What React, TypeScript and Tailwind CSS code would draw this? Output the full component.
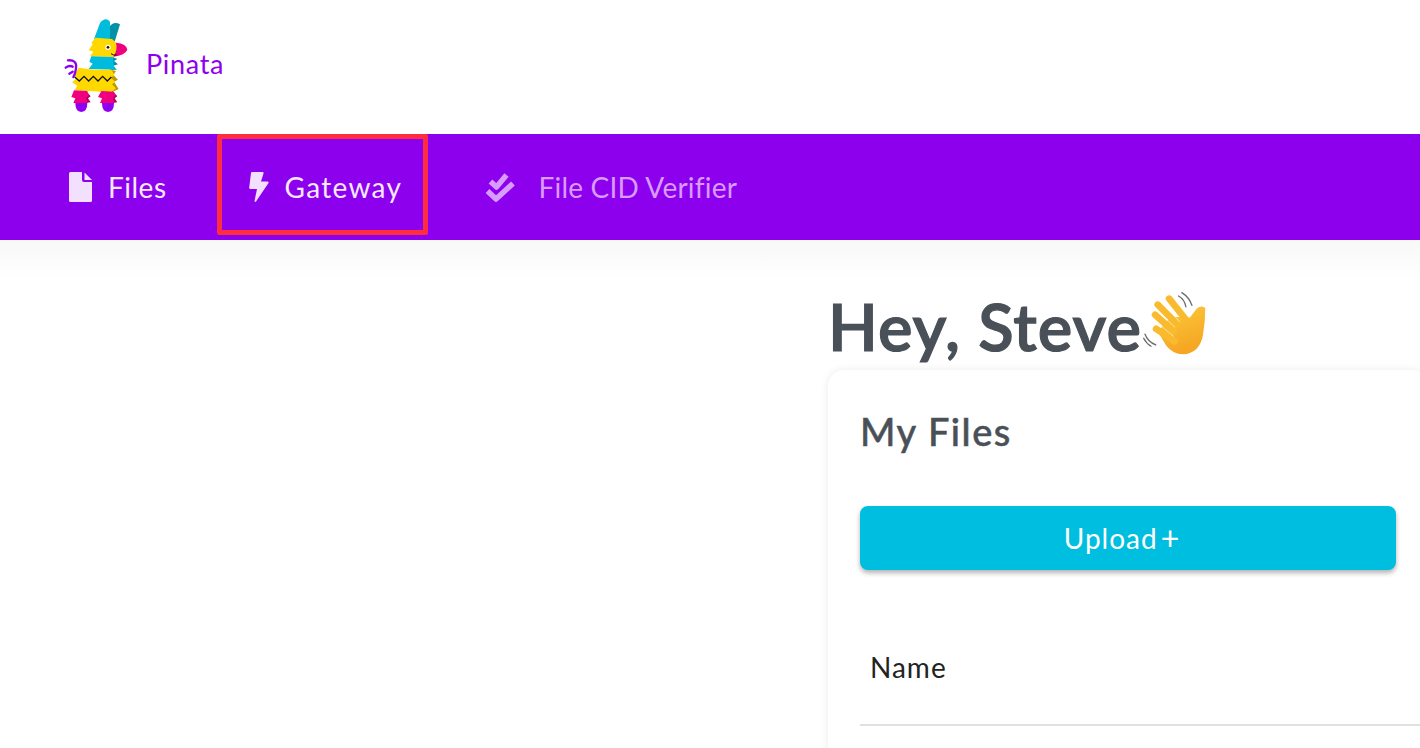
import type { ReactNode } from "react";

const font = { fontFamily: '"Lato", "Noto Sans", sans-serif' };

function PinataLogo() {
  return (
    <svg viewBox="0 0 225 300" className="h-[100px] w-[75px] shrink-0">
      <path d="M144 72 L146 38 Q160 16 180 28 L164 80 Z" fill="#0090a8" />
      <path d="M102 72 L120 24 Q136 4 150 20 L150 74 Z" fill="#00bcdc" />
      <path d="M158 126 L172 132 L162 138 L174 148 L160 152 L170 164 L150 164 Z" fill="#0090a8" />
      <path d="M106 68 L156 72 L172 86 L172 122 L158 126 L90 124 L100 110 L86 106 L98 88 L94 84 Z" fill="#ffd800" />
      <path d="M168 83 Q200 86 202 104 Q196 120 160 125 Q174 104 168 83 Z" fill="#f0007f" />
      <circle cx="144" cy="97" r="8" fill="#fff" />
      <circle cx="144" cy="97" r="4" fill="#111" />
      <path d="M153 116 Q160 122 170 120" stroke="#111" strokeWidth="3" fill="none" />
      <path d="M94 124 L158 126 L164 164 L86 162 L98 146 L88 140 Z" fill="#00bcdc" />
      <path d="M152 164 L168 168 L160 180 L174 194 L162 200 L176 222 L155 232 Z" fill="#b89a00" />
      <path d="M56 158 L100 164 L154 164 L164 180 L152 188 L166 200 L156 208 L168 220 L154 232 L44 226 L52 212 L36 202 L48 192 L42 180 Z" fill="#ffd800" />
      <path d="M44 186 L58 198 L72 184 L86 198 L100 184 L114 198 L128 184 L142 198 L154 186" stroke="#111" strokeWidth="4" fill="none" />
      <path d="M24 136 Q52 134 48 160 Q46 176 40 186 M17 158 Q28 150 38 155 M28 176 L38 170" stroke="#8f00f0" strokeWidth="7" fill="none" strokeLinecap="round" />
      <path d="M78 228 L92 244 L84 250 L92 262 L76 264 Z" fill="#b5005f" />
      <path d="M158 228 L172 244 L164 250 L172 262 L156 264 Z" fill="#b5005f" />
      <path d="M42 226 L82 228 L86 242 L78 248 L84 264 L40 264 L46 250 L34 246 Z" fill="#f0007f" />
      <path d="M124 228 L162 230 L166 242 L158 248 L164 264 L120 264 L126 250 L114 246 Z" fill="#f0007f" />
      <path d="M46 264 L82 264 Q82 290 64 291 Q46 290 46 264 Z" fill="#8f00f0" />
      <path d="M126 264 L162 264 Q162 290 144 291 Q126 290 126 264 Z" fill="#8f00f0" />
    </svg>
  );
}

function FileIcon() {
  return (
    <svg viewBox="0 0 23 30" className="h-[30px] w-[23px]" fill="#f3e0ff">
      <path d="M1.500 0 H13 V8 Q13 10 15 10 H23 V28.500 Q23 30 21.500 30 H1.500 Q0 30 0 28.500 V1.500 Q0 0 1.500 0 Z" />
      <path d="M15.500 0.500 L23 8 H15.500 Z" />
    </svg>
  );
}

function BoltIcon() {
  return (
    <svg viewBox="0 0 20 30" className="h-[30px] w-[20px]" fill="#f3e0ff">
      <path d="M3 0 H13.500 Q15 0 14.500 1.500 L12 9.500 H18.500 Q20 9.500 19.500 11 L7 29.500 Q6 30.500 5.500 29 L8 17 H1.500 Q0 17 0.200 15.500 L2 1 Q2.200 0 3 0 Z" />
    </svg>
  );
}

function DoubleCheckIcon() {
  return (
    <svg viewBox="0 0 31 30" className="h-[30px] w-[31px]" fill="none" stroke="#d89bff" strokeWidth="5.500" strokeLinejoin="round">
      <path d="M5.500 9.500 L11.500 15 L21.500 3" />
      <path d="M2.500 19 L11 27 L28 11.500" />
    </svg>
  );
}

function WaveHand() {
  return (
    <svg viewBox="30 20 200 195" className="h-[66px] w-[67px] shrink-0 -ml-[1px] -mt-[5px]">
      <defs>
        <linearGradient id="palm" x1="0" y1="0" x2="0.300" y2="1">
          <stop offset="0" stopColor="#fcc93a" />
          <stop offset="1" stopColor="#f5a623" />
        </linearGradient>
      </defs>
      <path d="M142 34 Q160 44 164 66 M152 24 Q174 38 182 62" stroke="#6b6b6b" strokeWidth="4" fill="none" strokeLinecap="round" />
      <path d="M42 148 Q50 170 74 180 M38 160 Q46 176 60 184" stroke="#6b6b6b" strokeWidth="4" fill="none" strokeLinecap="round" />
      <path d="M120 96 L176 98 L196 72 Q210 60 222 70 Q222 110 215 150 Q205 205 155 208 Q125 208 105 182 L80 140 Z" fill="url(#palm)" />
      <g stroke="#f9bb2d" strokeWidth="20" strokeLinecap="round" fill="none">
        <path d="M80 60 L138 118" />
        <path d="M114 42 L162 102" />
        <path d="M72 90 L128 140" />
        <path d="M75 132 L130 170" />
      </g>
      <g stroke="#fff8e0" strokeWidth="2" fill="none">
        <path d="M94 52 L146 112" />
        <path d="M76 74 L132 128" />
        <path d="M76 112 L128 155" />
      </g>
    </svg>
  );
}

function NavItem({ icon, label, className, textClass }: { icon: ReactNode; label: string; className?: string; textClass: string }) {
  return (
    <div className={`flex items-center ${className ?? ""}`}>
      {icon}
      <span className={`-mt-px text-[28px] ${textClass}`}>{label}</span>
    </div>
  );
}

export default function App() {
  return (
    <div className="h-[748px] w-[1420px] overflow-hidden bg-white" style={font}>
      <header className="flex h-[134px] items-center pb-[5px] pl-[60px]">
        <PinataLogo />
        <span className="ml-[11px] text-[27px] tracking-[0.7px] text-[#8f00f0]">Pinata</span>
      </header>

      <nav className="flex h-[106px] items-center bg-[#8c00ee] pl-[69px]">
        <NavItem icon={<FileIcon />} label="Files" className="gap-4" textClass="tracking-[0.5px] text-[#f5e8ff]" />
        <div className="ml-[50px] -mt-[5px] flex h-[101px] w-[211px] items-center rounded-[2px] border-[5px] border-[#ff2d3f] pl-[27px]">
          <NavItem icon={<BoltIcon />} label="Gateway" className="mt-[5px] gap-4" textClass="tracking-[1.3px] text-[#f5e8ff]" />
        </div>
        <NavItem icon={<DoubleCheckIcon />} label="File CID Verifier" className="ml-[57px] gap-[23px]" textClass="tracking-[0.2px] text-[#d89bff]" />
      </nav>

      <main className="bg-gradient-to-b from-[#f8f8f8] to-white to-[40px] pl-[828px] pt-[43px]">
        <h1 className="flex h-[87px] items-center whitespace-nowrap text-[65px] font-semibold leading-none tracking-[1px] text-[#4a5058] [-webkit-text-stroke:1.2px_#4a5058]">
          Hey, Steve
          <WaveHand />
        </h1>

        <section className="h-[500px] w-[600px] rounded-2xl bg-white px-8 pt-[33px] shadow-[0_0_8px_rgba(0,0,0,0.08)]">
          <h2 className="text-[38px] font-medium leading-[56px] tracking-[1.5px] text-[#4a5058] [-webkit-text-stroke:0.5px_#4a5058]">My Files</h2>

          <button className="mt-[47px] flex h-[64px] w-[536px] items-center justify-center rounded-lg bg-[#00bee0] pr-[13px] text-[28px] text-white shadow-[0_3px_5px_rgba(0,0,0,0.3)]">
            <span className="tracking-[1px]">Upload</span>
            <span className="ml-[3px] text-[32px] leading-none">+</span>
          </button>

          <div className="-mr-8 mt-[64px] flex h-[92px] items-center border-b-2 border-[#e0e0e0] pb-[24px] pl-[10px] text-[28px] tracking-[1px] text-[#222]">
            Name
          </div>
        </section>
      </main>
    </div>
  );
}
